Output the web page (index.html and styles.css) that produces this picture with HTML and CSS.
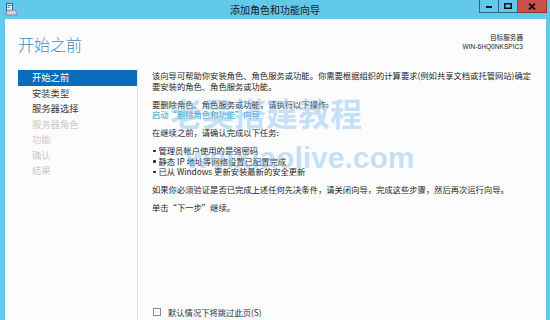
FILE: index.html
```html
<!DOCTYPE html>
<html lang="zh-CN">
<head>
<meta charset="utf-8">
<title>添加角色和功能向导</title>
<link rel="stylesheet" href="styles.css">
</head>
<body>
<div class="window">
  <div class="titlebar">
    <svg class="app-icon" width="13" height="13" viewBox="0 0 13 13">
      <rect x="1.5" y="0.5" width="6" height="8" fill="#e8f4fb" stroke="#1d6fb0"/>
      <rect x="2.5" y="2" width="4" height="1" fill="#1d6fb0"/>
      <rect x="2.5" y="4" width="2" height="1" fill="#1d6fb0"/>
      <path d="M3 7 L10 7 L12 9 L12 12 L1 12 L1 9 Z" fill="#b9c3c9" stroke="#7a868d" stroke-width="0.8"/>
      <rect x="2.5" y="9.5" width="8" height="1" fill="#eef2f4"/>
    </svg>
    <div class="title">添加角色和功能向导</div>
    <div class="controls">
      <span class="btn min"><svg width="8" height="6" viewBox="0 0 8 6"><rect x="1" y="3" width="6" height="2" fill="#111"/></svg></span>
      <span class="btn max"><svg width="8" height="6" viewBox="0 0 8 6"><rect x="0.75" y="0.75" width="6.5" height="4.5" fill="none" stroke="#111" stroke-width="1.5"/></svg></span>
      <span class="btn close"><svg width="8" height="7" viewBox="0 0 8 7"><path d="M1 0.5 L7 6.5 M7 0.5 L1 6.5" stroke="#111" stroke-width="1.8"/></svg></span>
    </div>
  </div>
  <div class="client">
    <div class="header">
      <h1 class="page-title">开始之前</h1>
      <div class="target">
        <div>目标服务器</div>
        <div>WIN-6HQ0NKSPIC3</div>
      </div>
    </div>
    <div class="main">
      <ul class="nav">
        <li class="nav-item active">开始之前</li>
        <li class="nav-item">安装类型</li>
        <li class="nav-item">服务器选择</li>
        <li class="nav-item disabled">服务器角色</li>
        <li class="nav-item disabled">功能</li>
        <li class="nav-item disabled">确认</li>
        <li class="nav-item disabled">结果</li>
      </ul>
      <div class="content">
        <p class="para">该向导可帮助你安装角色、角色服务或功能。你需要根据组织的计算要求(例如共享文档或托管网站)确定要安装的角色、角色服务或功能。</p>
        <p class="para">要删除角色、角色服务或功能，请执行以下操作:<br><span class="link">启动“删除角色和功能”向导</span></p>
        <p class="para">在继续之前，请确认完成以下任务:</p>
        <ul class="tasks">
          <li class="task">管理员帐户使用的是强密码</li>
          <li class="task">静态 IP 地址等网络设置已配置完成</li>
          <li class="task">已从 Windows 更新安装最新的安全更新</li>
        </ul>
        <p class="para">如果你必须验证是否已完成上述任何先决条件，请关闭向导，完成这些步骤，然后再次运行向导。</p>
        <p class="para">单击“下一步”继续。</p>
        <div class="footer">
          <span class="checkbox"></span>
          <span class="check-label">默认情况下将跳过此页(S)</span>
        </div>
      </div>
    </div>
  </div>
  <div class="watermark wm-cn">老吴搭建教程</div>
  <div class="watermark wm-en">weixiaolive.com</div>
</div>
</body>
</html>
```

FILE: styles.css
```css
* { box-sizing: border-box; }

html, body {
  margin: 0;
  padding: 0;
}

body {
  width: 550px;
  height: 320px;
  overflow: hidden;
  background: #63c9ea;
  font-family: "Noto Sans CJK SC", "Noto Sans", sans-serif;
}

.window {
  position: relative;
  width: 550px;
  height: 320px;
  display: flex;
  flex-direction: column;
  background: #63c9ea;
}

.titlebar {
  height: 19px;
  display: grid;
  grid-template-columns: 1fr auto 1fr;
  align-items: start;
}

.app-icon {
  margin: 3px 0 0 5px;
  display: block;
}

.title {
  font-size: 10px;
  line-height: 19px;
  color: #1a1a1a;
  white-space: nowrap;
}

.controls {
  justify-self: end;
  display: flex;
  margin-right: 3px;
}

.btn {
  height: 13px;
  display: flex;
  align-items: center;
  justify-content: center;
  border: 1px solid #2f6680;
  border-top: none;
}

.btn.min { width: 20px; }
.btn.max { width: 19px; border-left: none; }
.btn.close {
  width: 29px;
  border-left: none;
  background: #c9514b;
  border-color: #8c3a36;
}

.client {
  flex: 1;
  margin: 0 4px 0 5px;
  background: #fcfcfc;
  display: flex;
  flex-direction: column;
  min-height: 0;
}

.header {
  height: 51px;
  display: flex;
  justify-content: space-between;
  align-items: flex-start;
  padding: 0 23px 0 13px;
}

.page-title {
  margin: 15px 0 0 0;
  font-size: 16px;
  line-height: 20px;
  font-weight: 300;
  color: #3b8dbd;
}

.target {
  margin-top: 14px;
  text-align: right;
  font-family: "Liberation Sans", "Noto Sans CJK SC", sans-serif;
  font-size: 6.6px;
  line-height: 9px;
  color: #222;
}

.main {
  flex: 1;
  display: flex;
  min-height: 0;
}

.nav {
  list-style: none;
  margin: 0 0 0 13px;
  padding: 0;
  width: 120px;
  border-right: 1px solid #e2e2e2;
}

.nav-item {
  height: 15.5px;
  line-height: 15.5px;
  padding-left: 14px;
  font-size: 9.3px;
  color: #3a3a3a;
  white-space: nowrap;
}

.nav-item.active {
  background: #0a6cba;
  color: #fff;
}

.nav-item.disabled {
  color: #c9c9c9;
}

.content {
  flex: 1;
  display: flex;
  flex-direction: column;
  padding: 0 10px 2px 14px;
  font-size: 8.3px;
  line-height: 10.5px;
  color: #1e1e1e;
}

.para {
  margin: 0 0 7.5px 0;
}

.link {
  color: #3a96c8;
}

.tasks {
  list-style: none;
  margin: 0 0 7.5px 0;
  padding: 0;
}

.task {
  display: flex;
}

.task::before {
  content: "";
  flex: none;
  width: 2.5px;
  height: 2.5px;
  border-radius: 50%;
  background: #1e1e1e;
  margin: 4.5px 3px 0 1px;
}

.footer {
  margin-top: auto;
  display: flex;
  align-items: center;
  gap: 7px;
  padding-left: 1px;
  height: 12px;
}

.checkbox {
  width: 8px;
  height: 8px;
  border: 1px solid #8d8d8d;
  background: #fff;
}

.check-label {
  color: #333;
}

.watermark {
  position: absolute;
  color: rgba(125, 190, 240, 0.45);
  font-weight: 700;
  white-space: nowrap;
  pointer-events: none;
}

.wm-cn {
  left: 170px;
  top: 92px;
  font-size: 32px;
  line-height: 40px;
  font-family: "Noto Sans CJK SC", sans-serif;
}

.wm-en {
  left: 186px;
  top: 138px;
  font-size: 30px;
  line-height: 40px;
  font-family: "Liberation Sans", sans-serif;
}
```
